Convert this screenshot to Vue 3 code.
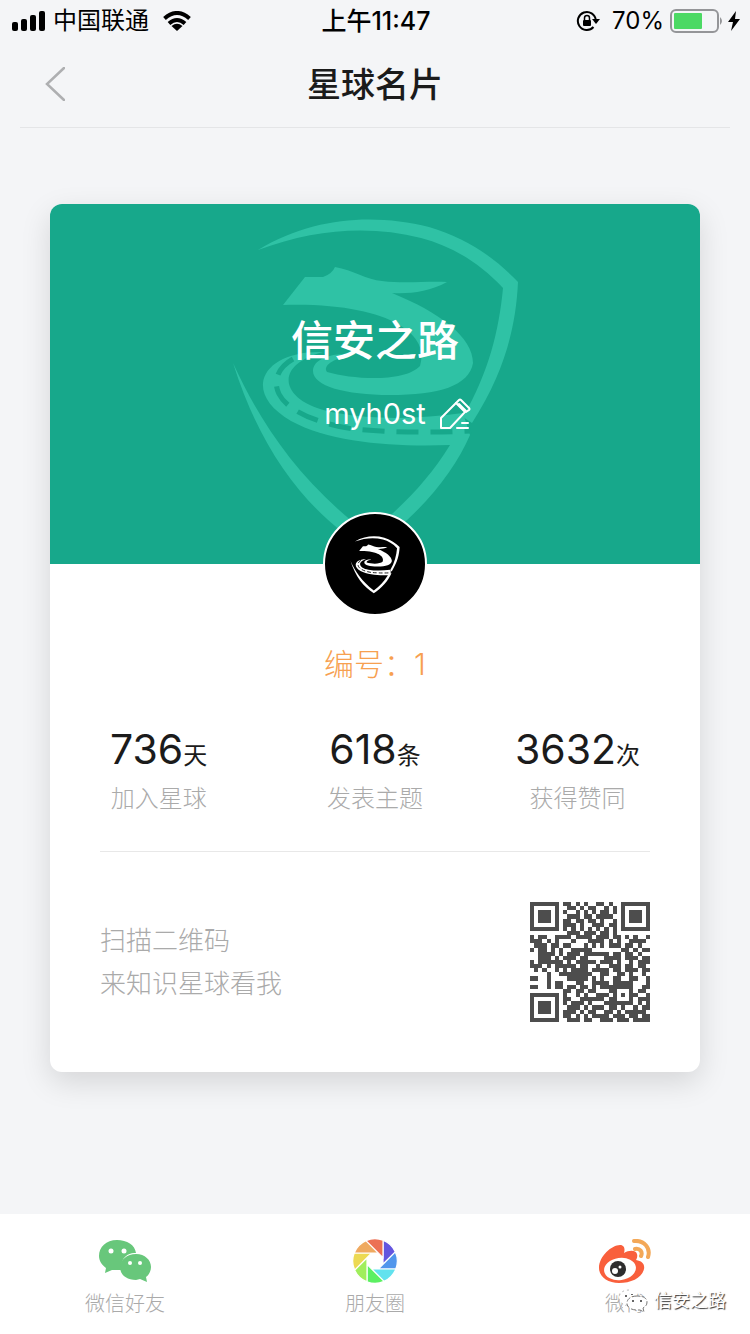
<script setup>
const stats = [
  { value: '736', unit: '天', label: '加入星球' },
  { value: '618', unit: '条', label: '发表主题' },
  { value: '3632', unit: '次', label: '获得赞同' },
]

const blades = ['#6455df', '#5196ec', '#62e2ee', '#5cf062', '#a0ee5c', '#ecd953', '#efa960', '#ec7054']

const qrRows = [
  '11111110110101001101001111111',
  '10000010011010110010101000001',
  '10111010100101010110101011101',
  '10111010011101101111001011101',
  '10111010110110110100101011101',
  '10000010111010011101101000001',
  '11111110101010101010101111111',
  '00000000011101110110100000000',
  '10110011110111101110110101001',
  '11101010001000111101010011110',
  '01110110110001010101110110100',
  '10110101001111100000001101011',
  '00111101011101111110110110100',
  '00111010111011000011110111011',
  '10111111010111110111010010111',
  '11101011111011001001110110110',
  '01010010101111011110110111011',
  '00001001111111100110011010010',
  '11001000011111010100110011001',
  '00001011000110011110111110001',
  '11001011011011010111111110011',
  '00000000110110110001100010110',
  '11111110100101001110101011001',
  '10000010110011111101100010111',
  '10111010101110100011111110101',
  '10111010011101011101101001011',
  '10111010111010110011010111110',
  '10000010110101011110111011011',
  '11111110011101100111011101111',
]
const qrPath = qrRows
  .map((row, y) => [...row].map((c, x) => (c === '1' ? `M${x} ${y}h1v1h-1z` : '')).join(''))
  .join('')
</script>

<template>
  <div class="screen">
    <svg class="defs" aria-hidden="true">
      <symbol id="shield" viewBox="0 0 300 360">
        <g fill="currentColor">
          <path d="M33 50C90 16 150 14 204 27C242 38 270 58 293 82C291 126 280 172 247 223L238 217C264 172 274 130 278 88C254 62 226 46 196 38C144 25 90 29 33 50Z" />
          <path d="M8 163C34 220 72 280 143 334C176 308 202 282 225 245C170 247 106 243 66 221C46 209 37 196 38 183C40 165 62 151 98 152C76 158 61 169 64 184C67 196 82 208 112 213C150 220 196 219 238 213L245 235C228 275 190 320 143 350C82 312 36 252 8 163Z" />
          <path d="M58 105L80 77L98 77Q107 74 110 67C128 70 142 80 157 81C180 84 200 81 222 82C204 92 184 94 167 93C214 112 248 137 248 163C244 186 214 195 165 195C120 195 88 186 88 171C88 158 110 152 128 155C106 159 98 166 102 172C130 180 180 182 195 166C206 135 164 102 58 105Z" />
        </g>
        <path d="M68 159C52 168 48 182 54 194C62 210 90 223 128 229Q180 234 246 231" class="road-dash" />
      </symbol>
    </svg>

    <header>
      <div class="status">
        <div class="status-left">
          <svg width="34" height="20" viewBox="0 0 34 20"><rect y="11" width="6" height="9" rx="2" /><rect x="9" y="8" width="6" height="12" rx="2" /><rect x="18" y="4" width="6" height="16" rx="2" /><rect x="27" width="6" height="20" rx="2" /></svg>
          <span>中国联通</span>
          <svg class="wifi" width="28" height="20" viewBox="0 0 28 20" fill="none" stroke="#000" stroke-width="4"><path d="M1.500 7.500Q14-3.500 26.500 7.500" /><path d="M6 12.500Q14 5.500 22 12.500" /><path d="M8.500 15Q14 10.500 19.500 15L14 20Z" fill="#000" stroke="none" /></svg>
        </div>
        <span class="time">上午11:47</span>
        <div class="status-right">
          <svg width="24" height="22" viewBox="0 0 24 22"><path d="M17.500 17A9 9 0 1 1 19.800 10" fill="none" stroke="#000" stroke-width="2" /><path d="M16 9h8l-4 5z" /><rect x="7" y="10" width="8" height="6" rx="1" /><path d="M8.500 10V8a2.500 2.500 0 0 1 5 0v2" fill="none" stroke="#000" stroke-width="1.500" /></svg>
          <span class="percent">70%</span>
          <svg width="54" height="24" viewBox="0 0 54 24"><rect x="1" y="1" width="47" height="22" rx="5" fill="none" stroke="#949598" stroke-width="2" /><rect x="4" y="4" width="28" height="16" rx="1" fill="#4cd964" /><path d="M50 8q4 4 0 8z" fill="#949598" /></svg>
          <svg class="bolt" width="12" height="20" viewBox="0 0 12 20"><path d="M8 0L0 11h5L3 20L12 8H7Z" /></svg>
        </div>
      </div>
      <nav class="nav">
        <button class="back" type="button" aria-label="返回">
          <svg width="20" height="34" viewBox="0 0 20 34"><path d="M19 1L2 17L19 33" fill="none" stroke="#aeafb1" stroke-width="2.500" stroke-linecap="round" /></svg>
        </button>
        <h1>星球名片</h1>
      </nav>
    </header>

    <main>
      <article class="card">
        <section class="hero">
          <svg class="hero-mark" width="300" height="360"><use href="#shield" /></svg>
          <h2>信安之路</h2>
          <div class="member">
            <span class="name">myh0st</span>
            <button class="edit" type="button" aria-label="编辑">
              <svg width="32" height="32" viewBox="0 0 32 32" fill="none" stroke="#fff" stroke-width="2" stroke-linejoin="round" stroke-linecap="round"><path d="M2 30V20L17 5L26 14L11 30Z" /><path d="M17 5L20 2Q21 1 22 2L30 10Q31 11 30 12L27 14M20 6L27 13" /><path d="M23 25h6M18 30h11" /></svg>
            </button>
          </div>
          <div class="avatar"><svg width="52" height="62"><use href="#shield" /></svg></div>
        </section>

        <section class="details">
          <p class="number">编号：1</p>
          <dl class="stats">
            <div v-for="s in stats" :key="s.label" class="stat">
              <dd>{{ s.value }}<small>{{ s.unit }}</small></dd>
              <dt>{{ s.label }}</dt>
            </div>
          </dl>
          <div class="scan">
            <p>扫描二维码<br />来知识星球看我</p>
            <svg class="qr" width="120" height="120" viewBox="0 0 29 29" shape-rendering="crispEdges" role="img" aria-label="二维码"><path :d="qrPath" fill="#4d4d4d" /></svg>
          </div>
        </section>
      </article>
    </main>

    <footer>
      <button type="button">
        <svg width="54" height="44" viewBox="0 0 54 44"><path d="M19 1C8 1 1 8 1 17C1 22 4 26 8 29L7 34L14 31H23C22 18 31 13 38 14C37 6 29 1 19 1Z" fill="#68c77b" /><path d="M38 15C29 15 22 21 22 28C22 36 29 41 38 41L42 40L49 43L48 38C51 36 53 32 53 28C53 21 47 15 38 15Z" fill="#68c77b" /><g fill="#fff"><circle cx="13" cy="12" r="2.500" /><circle cx="26" cy="12" r="2.500" /><circle cx="32" cy="24" r="2" /><circle cx="42" cy="24" r="2" /></g></svg>
        <span>微信好友</span>
      </button>
      <button type="button">
        <svg width="46" height="44" viewBox="-22 -22 44 44" stroke="#fff" stroke-width="1.200"><path v-for="(color, i) in blades" :key="color" :fill="color" :transform="`rotate(${i * 45})`" d="M8-20.800V3.300L20.400-9A22.300 22.300 0 0 0 8-20.800Z" /></svg>
        <span>朋友圈</span>
      </button>
      <button type="button">
        <svg width="54" height="44" viewBox="0 0 54 44"><path d="M1 29C1 17 14 6 22 6C27 6 27 11 26 14C31 11 38 11 39 15C40 18 38 21 38 21C44 22 47 25 46 30C44 39 33 44 21 44C10 44 1 38 1 29Z" fill="#f95f3c" /><ellipse cx="22" cy="30" rx="16" ry="11" fill="#fff" transform="rotate(-8 22 30)" /><circle cx="20" cy="30" r="8" fill="#2e2d2e" /><circle cx="17" cy="32" r="3" fill="#fff" /><circle cx="22" cy="28" r="1.500" fill="#fff" /><path d="M36 2C46 1 53 9 50 18M37 10C42 9 45 13 43 17" fill="none" stroke="#f3a858" stroke-width="4" stroke-linecap="round" /></svg>
        <span>微博</span>
      </button>
      <div class="watermark">
        <svg width="30" height="24" viewBox="0 0 30 24"><path d="M11 1C5 1 1 4 1 9c0 3 2 5 4 6l-1 4 4-3h6" fill="#fff" stroke="#bbb" stroke-dasharray="2 3" /><path d="M19 7c-6 0-10 3-10 7 0 5 5 7 10 7l3 0 4 2-1-4c3-2 4-3 4-6 0-4-4-6-10-6Z" fill="#fff" stroke="#777" stroke-dasharray="5 2" /><path d="M15 11v2M23 11v2M8 6v2M14 5v1" stroke="#666" stroke-width="2" /></svg>
        <span>信安之路</span>
      </div>
    </footer>
  </div>
</template>

<style>
body {
  margin: 0;
  background: #f4f5f7;
}
</style>

<style scoped>
.screen {
  min-height: 100vh;
  display: flex;
  flex-direction: column;
  background: #f4f5f7;
  color: #1b1b1b;
  font-family: Inter, "Noto Sans CJK SC", sans-serif;
}
.defs {
  position: absolute;
  width: 0;
  height: 0;
}
.road-dash {
  fill: none;
  stroke: var(--road);
  stroke-width: 5;
  stroke-dasharray: 22 12;
}
svg {
  display: block;
  flex: none;
}
button {
  padding: 0;
  border: 0;
  background: none;
  font: inherit;
  color: inherit;
}
h1, h2, p, dl, dd, dt {
  margin: 0;
}
.status {
  height: 40px;
  padding: 0 10px 0 12px;
  display: grid;
  grid-template-columns: 1fr auto 1fr;
  align-items: center;
  font-size: 24px;
  line-height: 42px;
  color: #000;
}
.status-left, .status-right {
  display: flex;
  align-items: center;
}
.status-left {
  gap: 7px;
}
.wifi {
  margin-left: 7px;
}
.time {
  font-size: 25px;
  font-weight: 500;
}
.status-right {
  justify-content: flex-end;
}
.percent {
  margin: 0 6px 0 12px;
}
.bolt {
  margin-left: 4px;
}
.nav {
  height: 87px;
  margin: 0 20px;
  border-bottom: 1px solid #e4e5e7;
  display: grid;
  grid-template-columns: 1fr auto 1fr;
  align-items: center;
}
.back {
  justify-self: start;
  margin-left: 25px;
}
h1 {
  padding-top: 2px;
  font-size: 34px;
  line-height: 48px;
  font-weight: 500;
}
main {
  flex: 1;
  padding: 76px 50px;
}
.card {
  border-radius: 12px;
  background: #fff;
  box-shadow: 0 10px 30px rgba(0, 0, 0, 0.13);
}
.hero {
  --road: #17a88b;
  position: relative;
  height: 360px;
  box-sizing: border-box;
  padding-top: 106px;
  border-radius: 12px 12px 0 0;
  background: #17a88b;
  color: #fff;
  text-align: center;
}
.hero-mark {
  position: absolute;
  top: -4px;
  left: calc(50% - 150px);
  color: #2fc2a5;
}
h2 {
  position: relative;
  font-size: 42px;
  line-height: 62px;
  font-weight: 500;
}
.member {
  position: relative;
  margin-top: 22px;
  display: grid;
  grid-template-columns: 1fr auto 1fr;
  align-items: center;
}
.name {
  grid-column: 2;
  font-size: 29px;
  line-height: 40px;
}
.edit {
  justify-self: start;
  margin-left: 13px;
}
.avatar {
  --road: #000;
  position: absolute;
  bottom: -52px;
  left: calc(50% - 52px);
  width: 100px;
  height: 100px;
  border: 2px solid #fff;
  border-radius: 50%;
  display: grid;
  place-items: center;
  background: #000;
}
.details {
  padding: 78px 50px 50px;
}
.number {
  font-size: 30px;
  line-height: 44px;
  font-weight: 300;
  text-align: center;
  color: #f7a050;
}
.stats {
  padding: 36px 10px 40px;
  border-bottom: 1px solid #e8e8e8;
  display: grid;
  grid-template-columns: 1fr auto 1fr;
}
.stat {
  display: flex;
  flex-direction: column;
  justify-self: start;
  text-align: center;
}
.stat:last-child {
  justify-self: end;
}
dd {
  font-size: 41px;
  line-height: 54px;
}
small {
  font-size: 24px;
}
dt {
  margin-top: 4px;
  font-size: 24px;
  line-height: 24px;
  font-weight: 300;
  color: #aaa;
}
.scan {
  padding-top: 50px;
  display: flex;
  align-items: center;
  justify-content: space-between;
}
.scan p {
  font-size: 26px;
  line-height: 43px;
  font-weight: 300;
  color: #aaa;
}
footer {
  position: relative;
  height: 120px;
  display: grid;
  grid-template-columns: repeat(3, 1fr);
  background: #fff;
}
footer button {
  display: flex;
  flex-direction: column;
  align-items: center;
  padding-top: 25px;
  gap: 8px;
  font-size: 20px;
  line-height: 26px;
  font-weight: 300;
  color: #aaa;
}
.watermark {
  position: absolute;
  right: 24px;
  bottom: 20px;
  display: flex;
  align-items: center;
  gap: 6px;
  font-size: 18px;
  line-height: 26px;
  color: #fff;
  text-shadow: 1px 1px 1px #333;
}
</style>
